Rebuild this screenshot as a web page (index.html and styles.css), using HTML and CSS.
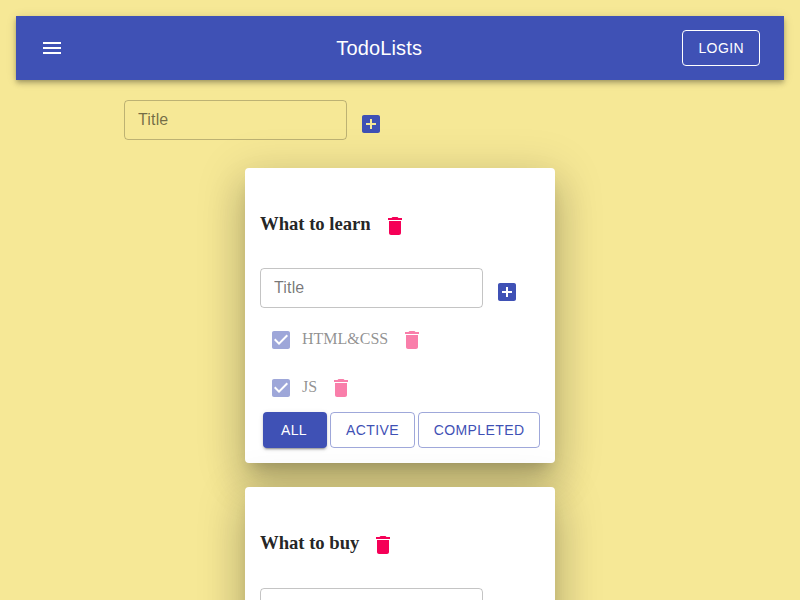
FILE: index.html
```html
<!DOCTYPE html>
<html lang="en">
<head>
<meta charset="utf-8">
<title>TodoLists</title>
<link rel="stylesheet" href="styles.css">
</head>
<body>
<svg class="sprite" aria-hidden="true">
  <symbol id="menu" viewBox="0 0 24 24"><path d="M3 18h18v-2H3v2zm0-5h18v-2H3v2zm0-7v2h18V6H3z"/></symbol>
  <symbol id="add" viewBox="0 0 24 24"><path d="M19 3H5c-1.11 0-2 .9-2 2v14c0 1.1.89 2 2 2h14c1.1 0 2-.9 2-2V5c0-1.1-.9-2-2-2zm-2 10h-4v4h-2v-4H7v-2h4V7h2v4h4v2z"/></symbol>
  <symbol id="trash" viewBox="0 0 24 24"><path d="M6 19c0 1.1.9 2 2 2h8c1.1 0 2-.9 2-2V7H6v12zM19 4h-3.500l-1-1h-5l-1 1H5v2h14V4z"/></symbol>
  <symbol id="check" viewBox="0 0 24 24"><path d="M19 3H5c-1.11 0-2 .9-2 2v14c0 1.100.89 2 2 2h14c1.110 0 2-.9 2-2V5c0-1.100-.89-2-2-2zm-9 14l-5-5 1.410-1.410L10 14.170l7.590-7.590L19 8l-9 9z"/></symbol>
</svg>
<header class="appbar">
  <button class="icon-button menu"><svg class="icon"><use href="#menu"/></svg></button>
  <h6 class="brand">TodoLists</h6>
  <button class="button login">Login</button>
</header>
<main class="content">
  <div class="add-form">
    <input class="field" placeholder="Title">
    <button class="icon-button primary"><svg class="icon"><use href="#add"/></svg></button>
  </div>
  <div class="lists">
    <section class="card">
      <h3 class="heading"><span class="heading-text">What to learn</span><button class="icon-button danger"><svg class="icon"><use href="#trash"/></svg></button></h3>
      <div class="add-form">
        <input class="field" placeholder="Title">
        <button class="icon-button primary"><svg class="icon"><use href="#add"/></svg></button>
      </div>
      <div class="task"><span class="checkbox"><svg class="icon"><use href="#check"/></svg></span><span class="task-text">HTML&amp;CSS</span><button class="icon-button danger"><svg class="icon"><use href="#trash"/></svg></button></div>
      <div class="task"><span class="checkbox"><svg class="icon"><use href="#check"/></svg></span><span class="task-text">JS</span><button class="icon-button danger"><svg class="icon"><use href="#trash"/></svg></button></div>
      <div class="filters">
        <button class="button contained">All</button>
        <button class="button outlined">Active</button>
        <button class="button outlined">Completed</button>
      </div>
    </section>
    <section class="card">
      <h3 class="heading"><span class="heading-text">What to buy</span><button class="icon-button danger"><svg class="icon"><use href="#trash"/></svg></button></h3>
      <div class="add-form">
        <input class="field">
        <button class="icon-button primary"><svg class="icon"><use href="#add"/></svg></button>
      </div>
    </section>
  </div>
</main>
</body>
</html>
```
FILE: styles.css
```css
* { box-sizing: border-box; }
html { height: 100%; overflow: hidden; background: #f6e896; }
body {
  height: 100%;
  margin: 0;
  padding: 16px;
  overflow: hidden;
  font: 16px/18px "Liberation Serif", serif;
  color: rgba(0, 0, 0, .87);
}
.sprite { display: none; }
.icon { display: block; width: 24px; height: 24px; fill: currentColor; }
.icon-button {
  flex: none;
  width: 48px;
  height: 48px;
  padding: 12px;
  border: 0;
  background: none;
  color: inherit;
}
.primary { color: #3f51b5; }
.danger { color: #f50057; }

.appbar {
  display: flex;
  align-items: center;
  justify-content: space-between;
  height: 64px;
  padding: 0 24px;
  background: #3f51b5;
  color: #fff;
  box-shadow: 0 2px 4px -1px rgba(0, 0, 0, .2), 0 4px 5px rgba(0, 0, 0, .14), 0 1px 10px rgba(0, 0, 0, .12);
}
.menu { margin-left: -12px; }
.brand {
  margin: 0;
  font: 500 20px/32px "Liberation Sans", sans-serif;
  letter-spacing: .15px;
}
.button {
  height: 36px;
  min-width: 64px;
  padding: 5px 15px;
  border: 1px solid;
  border-radius: 4px;
  background: none;
  color: inherit;
  font: 500 14px/24px "Liberation Sans", sans-serif;
  letter-spacing: .4px;
  text-transform: uppercase;
}
.outlined { border-color: rgba(63, 81, 181, .5); color: #3f51b5; }
.contained {
  border: 0;
  padding: 6px 17px 6px 15px;
  background: #3f51b5;
  color: #fff;
  box-shadow: 0 3px 1px -2px rgba(0, 0, 0, .2), 0 2px 2px rgba(0, 0, 0, .14), 0 1px 5px rgba(0, 0, 0, .12);
}

.content { padding: 20px 108px 0; }
.add-form { display: flex; align-items: flex-start; height: 48px; }
.field {
  width: 223px;
  height: 40px;
  padding: 0 13px;
  border: 1px solid rgba(0, 0, 0, .23);
  border-radius: 4px;
  background: none;
  font: 16px/19px "Liberation Sans", sans-serif;
  letter-spacing: .15px;
}
.field::placeholder { color: rgba(0, 0, 0, .54); opacity: 1; }
.lists {
  display: flex;
  flex-direction: column;
  align-items: center;
  gap: 24px;
  margin-top: 20px;
}
.card {
  width: 310px;
  padding: 15px;
  border-radius: 4px;
  background: #fff;
  box-shadow: 0 11px 15px -7px rgba(0, 0, 0, .2), 0 24px 38px 3px rgba(0, 0, 0, .14), 0 9px 46px 8px rgba(0, 0, 0, .12);
}
.heading {
  display: flex;
  align-items: center;
  height: 48px;
  margin: 18.72px 0;
  font-size: 18.72px;
  line-height: 22px;
  letter-spacing: -.04px;
}
.heading-text { padding-bottom: 4px; }
.task { display: flex; align-items: center; height: 48px; opacity: .5; }
.task-text { padding-bottom: 2px; }
.checkbox { padding: 9px; color: #3f51b5; }
.filters { display: flex; gap: 3px; padding-left: 3px; }
```
